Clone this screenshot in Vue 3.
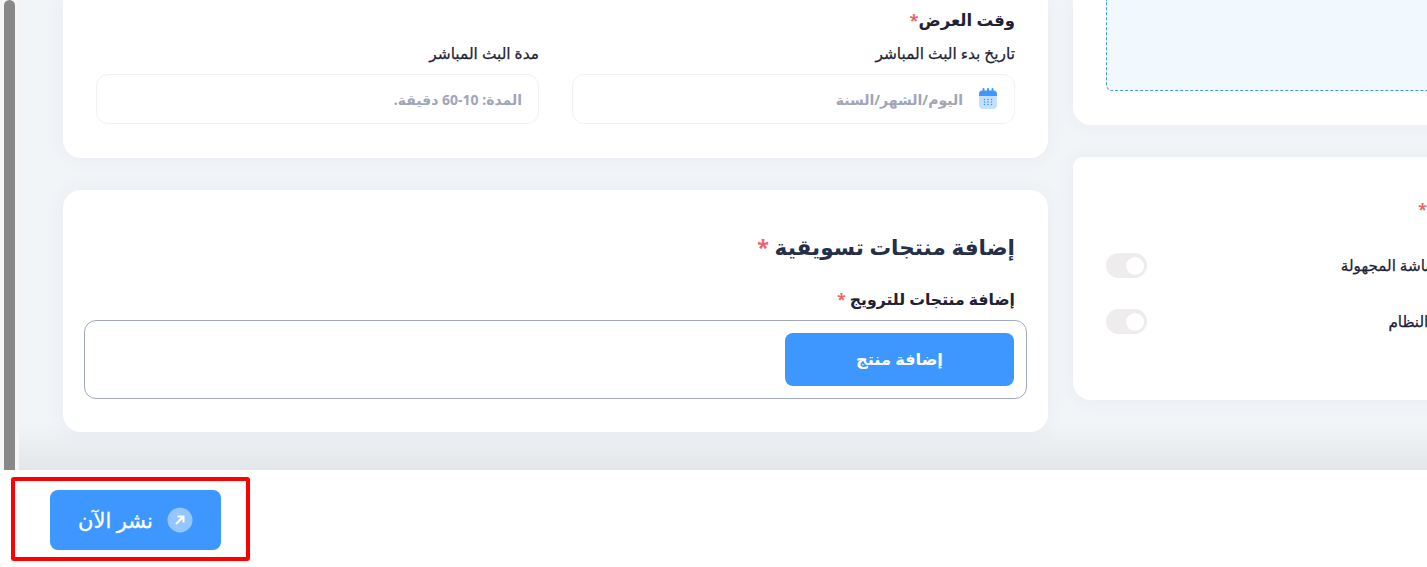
<template>
  <div class="page">
    <div class="upper">
      <div class="scrollbar"><div class="thumb"></div></div>
      <main class="main">
        <div class="col-left">
          <section class="card card-time" dir="rtl">
            <h3 class="time-title">وقت العرض<span class="req">*</span></h3>
            <div class="fields">
              <div class="field">
                <label class="lbl">تاريخ بدء البث المباشر</label>
                <div class="input">
                  <svg class="cal" width="20" height="22" viewBox="0 0 20 22">
                    <path d="M1 6h18v11a4 4 0 0 1-4 4H5a4 4 0 0 1-4-4z" fill="#c5dfff" />
                    <path d="M1 8V6a3.500 3.500 0 0 1 3.500-3.500h11A3.500 3.500 0 0 1 19 6v2z" fill="#3e97ff" />
                    <rect x="4.500" y="0" width="2" height="4" rx="1" fill="#3e97ff" />
                    <rect x="9" y="0" width="2" height="4" rx="1" fill="#3e97ff" />
                    <rect x="13.500" y="0" width="2" height="4" rx="1" fill="#3e97ff" />
                    <g fill="#3e97ff">
                      <circle v-for="d in dots" :key="d[0] + '-' + d[1]" :cx="d[0]" :cy="d[1]" r=".8" />
                    </g>
                  </svg>
                  <span class="ph">اليوم/الشهر/السنة</span>
                </div>
              </div>
              <div class="field">
                <label class="lbl">مدة البث المباشر</label>
                <div class="input"><span class="ph">المدة: 10-60 دقيقة.</span></div>
              </div>
            </div>
          </section>
          <section class="card card-products" dir="rtl">
            <h2 class="prod-title">إضافة منتجات تسويقية <span class="req">*</span></h2>
            <label class="prod-lbl">إضافة منتجات للترويج <span class="req">*</span></label>
            <div class="prod-box">
              <button class="add-btn">إضافة منتج</button>
            </div>
          </section>
        </div>
        <div class="col-right">
          <section class="card card-upload"><div class="dropzone"></div></section>
          <section class="card card-settings" dir="rtl">
            <h3 class="set-title">الإعدادات <span class="req">*</span></h3>
            <div class="set-row"><span class="set-lbl">تفعيل الشاشة المجهولة</span><span class="toggle"><i></i></span></div>
            <div class="set-row"><span class="set-lbl">إشعارات النظام</span><span class="toggle"><i></i></span></div>
          </section>
        </div>
      </main>
    </div>
    <footer class="footer">
      <button class="publish">
        <svg width="26" height="26" viewBox="0 0 26 26">
          <circle cx="13" cy="13" r="12.500" fill="#fff" fill-opacity=".45" />
          <path d="M9 17l7.500-7.500M10.500 9.500h6v6" fill="none" stroke="#fff" stroke-width="2" />
        </svg>
        <span dir="rtl">نشر الآن</span>
      </button>
      <div class="highlight"></div>
    </footer>
  </div>
</template>

<script setup>
const dots = []
for (const y of [11.5, 14, 16.5]) {
  for (const x of [6.5, 10, 13.5]) dots.push([x, y])
}
</script>

<style>
html, body { margin: 0; overflow: hidden; background: #fff; }
</style>

<style scoped>
.page {
  width: 1427px;
  height: 567px;
  display: flex;
  flex-direction: column;
  overflow: hidden;
  font-family: "Noto Sans", "DejaVu Sans", sans-serif;
  color: #1e2235;
}
.upper { height: 470px; display: flex; flex: none; }
.scrollbar { width: 19px; flex: none; background: #f6f6f6; padding: 0 4px; box-sizing: border-box; }
.thumb { width: 11px; height: 470px; background: #888; border-radius: 6px 6px 0 0; }
.main {
  flex: 1;
  min-width: 0;
  overflow: hidden;
  display: flex;
  gap: 25px;
  padding-left: 44px;
  background: linear-gradient(180deg, #f1f5f8 0, #f1f5f8 90%, #e3e6e9 100%);
}
.col-left { width: 985px; flex: none; display: flex; flex-direction: column; gap: 32px; }
.col-right { width: 447px; flex: none; display: flex; flex-direction: column; gap: 32px; }
.card { background: #fff; border-radius: 18px; box-sizing: border-box; box-shadow: 0 0 20px rgba(76, 87, 125, .05); }
.card-time { height: 158px; padding: 9px 33px 0; border-radius: 0 0 18px 18px; }
.time-title { margin: 0; font-size: 16.5px; line-height: 22px; font-weight: 700; }
.req { color: #f1606b; }
.fields { display: flex; gap: 33px; margin-top: 13px; }
.field { flex: 1; }
.lbl { display: block; font-size: 15.4px; line-height: 20px; font-weight: 500; -webkit-text-stroke: .25px currentColor; }
.input {
  height: 50px;
  margin-top: 10px;
  box-sizing: border-box;
  border: 1px solid #eff2f5;
  border-radius: 12px;
  padding: 0 16px;
  display: flex;
  align-items: center;
  gap: 15px;
}
.ph { font-size: 14px; font-weight: 700; color: #a1a5b7; }
.card-products { height: 242px; padding: 41px 33px 0; }
.prod-title { margin: 0; font-size: 21.6px; line-height: 32px; font-weight: 700; color: #252f4a; }
.prod-lbl { display: block; margin-top: 26px; font-size: 15.7px; line-height: 20px; font-weight: 700; }
.prod-box {
  margin: 11px -12px 0;
  height: 79px;
  box-sizing: border-box;
  border: 1px solid #a1a9c4;
  border-radius: 12px;
  padding: 12px;
}
.add-btn {
  display: block;
  width: 229px;
  height: 53px;
  border: 0;
  border-radius: 8px;
  background: #3e97ff;
  color: #fff;
  padding: 0 0 2px;
  font: 700 16.2px "Noto Sans", "DejaVu Sans", sans-serif;
}
.card-upload { height: 125px; padding: 0 33px; border-radius: 0 0 0 18px; }
.dropzone { height: 91px; background: #f1f9ff; border: 1px dashed #3e97ff; border-top: 0; border-right: 0; border-radius: 0 0 0 6px; box-sizing: border-box; }
.card-settings { height: 243px; padding: 40px 33px 0; border-radius: 10px 0 0 18px; }
.set-title { margin: 0 -17px 0 0; font-size: 16px; line-height: 24px; font-weight: 700; }
.set-row { display: flex; justify-content: space-between; align-items: center; height: 25px; margin-top: 31px; }
.set-title + .set-row { margin-top: 32px; }
.set-lbl { font-size: 15.2px; font-weight: 500; margin-top: -2px; -webkit-text-stroke: .25px currentColor; }
.toggle { width: 41px; height: 25px; border-radius: 13px; background: #eeecec; display: flex; align-items: center; flex: none; direction: ltr; justify-content: flex-end; padding-right: 3px; box-sizing: border-box; }
.toggle i { width: 18px; height: 18px; background: #fff; border-radius: 50%; }
.footer { flex: 1; position: relative; background: #fff; padding: 20px 0 0 50px; }
.publish {
  width: 171px;
  height: 60px;
  border: 0;
  border-radius: 8px;
  background: #3e97ff;
  color: #fff;
  font: 500 21px "Noto Sans", "DejaVu Sans", sans-serif;
  -webkit-text-stroke: .3px #fff;
  display: flex;
  align-items: center;
  justify-content: center;
  gap: 14px;
  flex-direction: row-reverse;
}
.highlight {
  position: absolute;
  left: 11px;
  top: 7px;
  width: 239px;
  height: 84px;
  box-sizing: border-box;
  border: 4px solid #ff0000;
  border-radius: 3px;
  pointer-events: none;
}
</style>
